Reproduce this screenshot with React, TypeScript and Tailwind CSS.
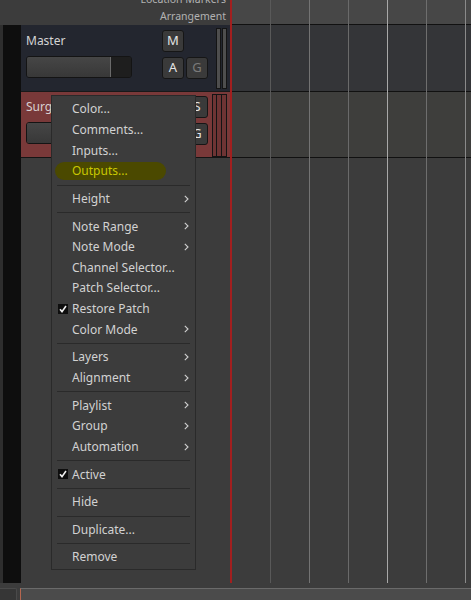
import React from "react";

type Item =
  | { sep: true }
  | { label: string; sub?: boolean; check?: boolean; hl?: boolean; sep?: false };

const menu: Item[] = [
  { label: "Color..." },
  { label: "Comments..." },
  { label: "Inputs..." },
  { label: "Outputs...", hl: true },
  { sep: true },
  { label: "Height", sub: true },
  { sep: true },
  { label: "Note Range", sub: true },
  { label: "Note Mode", sub: true },
  { label: "Channel Selector..." },
  { label: "Patch Selector..." },
  { label: "Restore Patch", check: true },
  { label: "Color Mode", sub: true },
  { sep: true },
  { label: "Layers", sub: true },
  { label: "Alignment", sub: true },
  { sep: true },
  { label: "Playlist", sub: true },
  { label: "Group", sub: true },
  { label: "Automation", sub: true },
  { sep: true },
  { label: "Active", check: true },
  { sep: true },
  { label: "Hide" },
  { sep: true },
  { label: "Duplicate..." },
  { sep: true },
  { label: "Remove" },
];

const gridLines = ["#595959", "#737373", "#6a6a6a", "#a8a8a8", "#6e6e6e", "#8a8a8a"];

const Btn = ({ label, dim }: { label: string; dim?: boolean }) => (
  <div
    className={`flex h-[22px] w-[22px] items-center justify-center rounded-[3px] border border-[#161616] bg-[#3a3a3a] text-[13px] ${
      dim ? "text-[#7a7a7a]" : "text-[#e4e4e4]"
    }`}
  >
    {label}
  </div>
);

const Fader = () => (
  <div className="flex h-[22px] w-[106px] overflow-hidden rounded-[3px] border border-[#141414]">
    <div className="w-[84px] border-r border-[#6a6a6a] bg-gradient-to-b from-[#464646] to-[#383838]" />
    <div className="flex-1 bg-[#1e1e1e]" />
  </div>
);

const Chevron = () => (
  <svg width="5" height="8" viewBox="0 0 5 8" fill="none">
    <path d="M0.8 0.8 L4 4 L0.8 7.2" stroke="#d0d0d0" strokeWidth="1.1" />
  </svg>
);

const Check = () => (
  <div className="flex h-[10px] w-[10px] items-center justify-center bg-[#0e0e0e]">
    <svg width="8" height="8" viewBox="0 0 8 8" fill="none">
      <path d="M1 4.2 L3 6.6 L7 1" stroke="#f0f0f0" strokeWidth="1.6" />
    </svg>
  </div>
);

const ContextMenu = () => (
  <div className="absolute left-[51px] top-[95px] w-[145px] border border-[#2a2a2a] bg-[#3c3c3c] pb-[1px] pt-[3px]">
    {menu.map((it, i) =>
      it.sep ? (
        <div key={i} className="mx-[5px] my-[3px] h-[1px] bg-[#2a2a2a]" />
      ) : (
        <div key={i} className="relative flex h-[20.65px] items-center">
          {it.hl && (
            <div className="absolute left-[3px] top-[1.5px] h-[18px] w-[111px] rounded-full bg-[#4b4900]" />
          )}
          {it.check && (
            <div className="absolute left-[6px] top-[5px]">
              <Check />
            </div>
          )}
          <span
            className={`relative pl-[20px] text-[12px] ${
              it.hl ? "text-[#c9c700]" : "text-[#d2d2d2]"
            }`}
          >
            {it.label}
          </span>
          {it.sub && (
            <div className="absolute right-[6px] top-[6px]">
              <Chevron />
            </div>
          )}
        </div>
      )
    )}
  </div>
);

export default function App() {
  return (
    <div className="relative flex h-[600px] w-[471px] flex-col overflow-hidden bg-[#3c3c3c] font-['Noto_Sans',sans-serif]">
      <div className="flex h-[583px]">
        {/* track headers */}
        <div className="flex w-[230px] flex-col">
          <div className="flex h-[25px] flex-col items-end justify-end overflow-hidden pb-[1px] pr-[4px] text-[10.5px] leading-[15px] text-[#b2b2b2]">
            <span className="mb-[2px]">Location Markers</span>
            <span>Arrangement</span>
          </div>
          <div className="flex flex-1">
            <div className="w-[3px] bg-[#2e2e2e]" />
            <div className="w-[18px] bg-[#0e0e0e]" />
            <div className="flex flex-1 flex-col">
              {/* Master */}
              <div className="flex h-[67px] border-b border-[#191919] bg-[#23262f]">
                <div className="w-[141px] pl-[5px] pt-[8px]">
                  <div className="text-[12px] leading-[16px] text-[#d4d4d4]">Master</div>
                  <div className="mt-[7px]">
                    <Fader />
                  </div>
                </div>
                <div className="flex w-[46px] flex-col gap-[5px] pt-[5px]">
                  <div className="flex gap-[2px]">
                    <Btn label="M" />
                  </div>
                  <div className="flex gap-[2px]">
                    <Btn label="A" />
                    <Btn label="G" dim />
                  </div>
                </div>
                <div className="ml-[8px] flex gap-[1px] pt-[3px]">
                  <div className="h-[61px] w-[5px] border border-[#141414] bg-[#4e4e4e]" />
                  <div className="h-[61px] w-[5px] border border-[#141414] bg-[#4e4e4e]" />
                </div>
              </div>
              {/* Surge */}
              <div className="flex h-[66px] border-b border-[#141414] bg-[#793939]">
                <div className="w-[117px] pl-[5px] pt-[7px]">
                  <div className="text-[12px] leading-[16px] text-[#d8d0d0]">Surge XT</div>
                  <div className="mt-[7px]">
                    <Fader />
                  </div>
                </div>
                <div className="flex w-[70px] flex-col gap-[5px] pt-[4px]">
                  <div className="flex gap-[2px]">
                    <Btn label="R" />
                    <Btn label="M" />
                    <Btn label="S" />
                  </div>
                  <div className="flex justify-end gap-[2px]">
                    <Btn label="A" />
                    <Btn label="G" />
                  </div>
                </div>
                <div className="ml-[4px] flex pt-[2px]">
                  <div className="h-[63px] w-[5px] border border-[#141414] bg-[#6e3434]" />
                  <div className="h-[63px] w-[5px] border border-l-0 border-[#141414] bg-[#6e3434]" />
                  <div className="h-[63px] w-[5px] border border-l-0 border-[#141414] bg-[#6e3434]" />
                </div>
              </div>
              <div className="flex-1" />
            </div>
          </div>
        </div>

        <div className="w-[2px] bg-[#a21f1f]" />

        {/* timeline */}
        <div className="relative flex flex-1 flex-col">
          <div className="h-[25px] border-b border-[#111] bg-[#474747]" />
          <div className="h-[67px] border-b border-[#111] bg-[#343538]" />
          <div className="h-[66px] border-b border-[#111] bg-[#3e3e3c]" />
          <div className="flex-1 bg-[#3c3c3c]" />
          <div className="absolute inset-0 flex">
            {gridLines.map((c, i) => (
              <div key={i} className="flex">
                <div className="w-[38px]" />
                <div className="w-[1px]" style={{ backgroundColor: c }} />
              </div>
            ))}
          </div>
        </div>
      </div>

      {/* bottom scroll bar */}
      <div className="mt-[5px] flex h-[12px]">
        <div className="w-[17px] rounded-tr-[2px] border-t border-r border-[#4a4a4a] bg-[#363636]" />
        <div className="w-[3px]" />
        <div className="flex-1 border-l border-t border-l-[#b5664f] border-t-[#6a6a6a] bg-[#4b4b4b]" />
      </div>

      <ContextMenu />
    </div>
  );
}
